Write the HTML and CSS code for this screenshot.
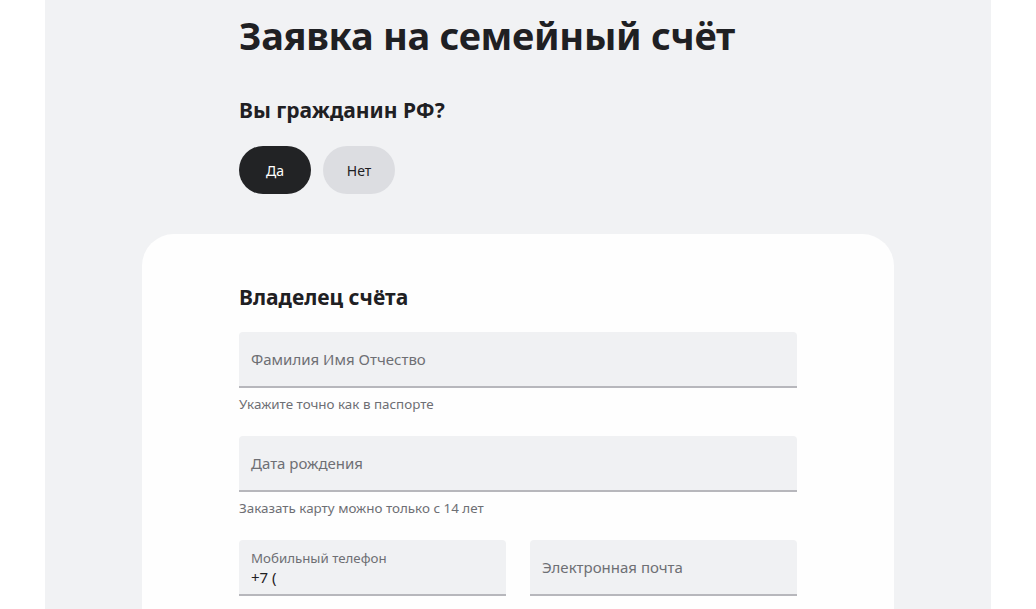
FILE: index.html
```html
<!DOCTYPE html>
<html lang="ru">
<head>
<meta charset="utf-8">
<title>Заявка на семейный счёт</title>
<link rel="stylesheet" href="styles.css">
</head>
<body>
<div class="panel">
  <div class="intro">
    <h1 class="title">Заявка на семейный счёт</h1>
    <h2 class="question">Вы гражданин РФ?</h2>
    <div class="choices">
      <button class="choice choice-active">Да</button>
      <button class="choice">Нет</button>
    </div>
  </div>
  <div class="card">
    <div class="card-inner">
      <h3 class="card-title">Владелец счёта</h3>
      <div class="field">
        <div class="input"><span class="placeholder">Фамилия Имя Отчество</span></div>
        <div class="hint">Укажите точно как в паспорте</div>
      </div>
      <div class="field">
        <div class="input"><span class="placeholder">Дата рождения</span></div>
        <div class="hint">Заказать карту можно только с 14 лет</div>
      </div>
      <div class="row">
        <div class="input input-filled">
          <span class="label">Мобильный телефон</span>
          <span class="value">+7 (</span>
        </div>
        <div class="input"><span class="placeholder">Электронная почта</span></div>
      </div>
    </div>
  </div>
</div>
</body>
</html>
```

FILE: styles.css
```css
* { box-sizing: border-box; }
html, body { margin: 0; padding: 0; background: #ffffff; }
body {
  font-family: "Noto Sans", "Open Sans", sans-serif;
  color: #1f2023;
  overflow: hidden;
  height: 609px;
}
.panel {
  width: 946px;
  margin: 0 auto;
  background: #f1f2f4;
  min-height: 609px;
  padding-top: 7px;
}
.intro {
  width: 558px;
  margin: 0 auto;
}
.title {
  margin: 0;
  font-size: 38px;
  line-height: 56px;
  font-weight: 700;
  letter-spacing: -0.3px;
}
.question {
  margin: 33px 0 0;
  font-size: 21px;
  line-height: 28px;
  font-weight: 700;
}
.choices {
  display: flex;
  gap: 12px;
  margin-top: 22px;
}
.choice {
  width: 72px;
  height: 48px;
  border: none;
  border-radius: 24px;
  background: #dcdde1;
  color: #1f2023;
  font-family: inherit;
  font-size: 14px;
  padding: 0;
}
.choice-active {
  background: #222325;
  color: #ffffff;
}
.card {
  width: 752px;
  margin: 40px auto 0;
  background: #fefefe;
  border-radius: 32px 32px 0 0;
  padding: 49px 97px 0;
  min-height: 400px;
}
.card-title {
  margin: 0;
  font-size: 21px;
  line-height: 28px;
  font-weight: 700;
}
.field { margin-top: 21px; }
.field + .field { margin-top: 23px; }
.input {
  height: 56px;
  background: #f0f1f3;
  border-radius: 4px 4px 0 0;
  border-bottom: 2px solid #b7b7bc;
  display: flex;
  flex-direction: column;
  justify-content: center;
  padding: 0 12px;
}
.placeholder {
  font-size: 15px;
  color: #6e6f74;
  line-height: 20px;
}
.hint {
  font-size: 13.4px;
  line-height: 18px;
  color: #6e6f74;
  margin-top: 7px;
}
.row {
  display: grid;
  grid-template-columns: 1fr 1fr;
  column-gap: 24px;
  margin-top: 23px;
}
.input-filled {
  justify-content: flex-start;
  padding-top: 9px;
}
.label {
  font-size: 13.3px;
  line-height: 18px;
  color: #6e6f74;
}
.value {
  font-size: 15px;
  line-height: 20px;
  color: #1f2023;
}
```
